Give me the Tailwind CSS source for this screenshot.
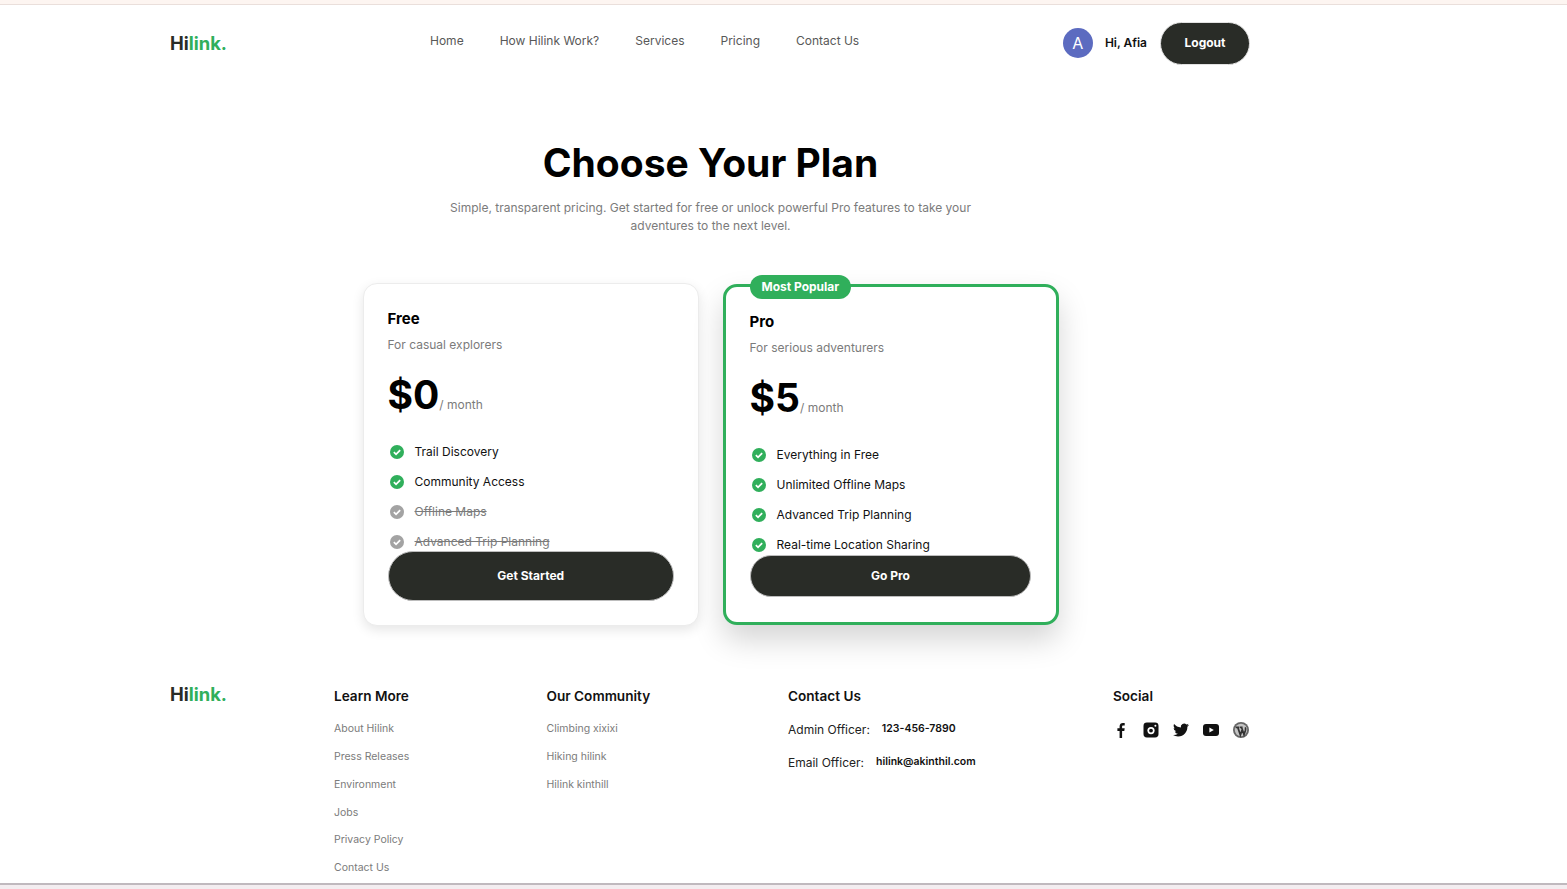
<!DOCTYPE html>
<html lang="en">
<head>
  <meta charset="UTF-8" />
  <title>Hilink - Pricing</title>
  <script src="https://cdn.jsdelivr.net/npm/@tailwindcss/browser@4"></script>
</head>
<body class="font-[Inter,sans-serif] bg-white h-[889px] overflow-hidden flex flex-col">
  <!-- Top strip -->
  <div class="h-[5px] shrink-0 bg-[#fdf5f1] border-b border-[#eadfdb]"></div>

  <div class="h-[878px] shrink-0 overflow-hidden">
    <!-- Navigation -->
    <nav class="relative h-[77px] pl-[170px] pr-[317px] flex items-start justify-between">
      <a class="mt-[24px] text-[18.4px] leading-[28px] font-bold text-[#292c27]">Hi<span class="text-[#30af5b]">link.</span></a>
      <ul class="absolute left-[430px] top-[27px] flex gap-[36px] text-[12px] leading-[18px] text-[#585858]">
        <li>Home</li>
        <li>How Hilink Work?</li>
        <li>Services</li>
        <li>Pricing</li>
        <li>Contact Us</li>
      </ul>
      <div class="mt-[16.5px] ml-auto flex items-center">
        <div class="w-[30px] h-[30px] rounded-full bg-[#5c6bc0] text-white text-[16px] flex items-center justify-center">A</div>
        <span class="ml-[12px] text-[12px] font-semibold text-[#111]">Hi, Afia</span>
        <button class="ml-[13px] w-[90px] h-[43px] rounded-full bg-[#292c27] border border-[#e2e2e2] text-white text-[12px] font-bold">Logout</button>
      </div>
    </nav>

    <!-- Heading -->
    <section class="w-[1421px] text-center">
      <h1 class="mt-[55px] text-[39px] leading-[52px] font-bold text-black">Choose Your Plan</h1>
      <p class="mt-[10px] mx-auto w-[540px] text-[12px] leading-[18px] text-[#7b7b7b]">Simple, transparent pricing. Get started for free or unlock powerful Pro features to take your adventures to the next level.</p>
    </section>

    <!-- Plans -->
    <section class="mt-[48px] pl-[363px] flex gap-[24px] items-start">
      <div class="w-[336px] h-[343px] rounded-[14px] bg-white border border-[#ececec] shadow-[0_4px_12px_rgba(0,0,0,0.1)] pl-[23.5px] pr-[24px] pt-[24px]">
        <h2 class="text-[15px] leading-[22px] font-bold text-black">Free</h2>
        <p class="mt-[6px] text-[12px] leading-[18px] text-[#7b7b7b]">For casual explorers</p>
        <div class="mt-[16.5px] flex items-end h-[50px]">
          <span class="mb-[1px] text-[39px] leading-[50px] font-bold text-black">$0</span>
          <span class="mb-[7px] text-[12px] leading-[18px] text-[#7b7b7b]">/ month</span>
        </div>
        <ul class="mt-[16.5px] text-[12px] text-[#111]">
          <li class="h-[30px] flex items-center">
            <svg class="ml-[2px] w-[14px] h-[14px]" viewBox="0 0 16 16"><circle cx="8" cy="8" r="8" fill="#30af5b"/><path d="M4.4 8.2l2.5 2.4 4.7-4.8" fill="none" stroke="#fff" stroke-width="2"/></svg>
            <span class="ml-[11px]">Trail Discovery</span>
          </li>
          <li class="h-[30px] flex items-center">
            <svg class="ml-[2px] w-[14px] h-[14px]" viewBox="0 0 16 16"><circle cx="8" cy="8" r="8" fill="#30af5b"/><path d="M4.4 8.2l2.5 2.4 4.7-4.8" fill="none" stroke="#fff" stroke-width="2"/></svg>
            <span class="ml-[11px]">Community Access</span>
          </li>
          <li class="h-[30px] flex items-center">
            <svg class="ml-[2px] w-[14px] h-[14px]" viewBox="0 0 16 16"><circle cx="8" cy="8" r="8" fill="#a3a3a3"/><path d="M4.4 8.2l2.5 2.4 4.7-4.8" fill="none" stroke="#fff" stroke-width="2"/></svg>
            <span class="ml-[11px] line-through text-[#7b7b7b]">Offline Maps</span>
          </li>
          <li class="h-[30px] flex items-center">
            <svg class="ml-[2px] w-[14px] h-[14px]" viewBox="0 0 16 16"><circle cx="8" cy="8" r="8" fill="#a3a3a3"/><path d="M4.4 8.2l2.5 2.4 4.7-4.8" fill="none" stroke="#fff" stroke-width="2"/></svg>
            <span class="ml-[11px] line-through text-[#7b7b7b]">Advanced Trip Planning</span>
          </li>
        </ul>
        <button class="relative -mt-[6px] block w-[286.5px] h-[50px] rounded-full bg-[#292c27] border border-[#bdbdbd] text-white text-[12px] font-bold">Get Started</button>
      </div>

      <div class="relative mt-[1px] w-[336px] h-[341px] rounded-[14px] bg-white border-[3px] border-[#30af5b] shadow-[0_15px_30px_rgba(0,0,0,0.17)] pl-[23.5px] pr-[25px] pt-[24px]">
        <span class="absolute left-[24px] -top-[12px] h-[24px] px-[11.5px] rounded-full bg-[#30af5b] text-white text-[12px] leading-[24px] font-bold">Most Popular</span>
        <h2 class="text-[15px] leading-[22px] font-bold text-black">Pro</h2>
        <p class="mt-[6px] text-[12px] leading-[18px] text-[#7b7b7b]">For serious adventurers</p>
        <div class="mt-[16.5px] flex items-end h-[50px]">
          <span class="mb-[1px] text-[39px] leading-[50px] font-bold text-black">$5</span>
          <span class="mb-[7px] text-[12px] leading-[18px] text-[#7b7b7b]">/ month</span>
        </div>
        <ul class="mt-[16.5px] text-[12px] text-[#111]">
          <li class="h-[30px] flex items-center">
            <svg class="ml-[2px] w-[14px] h-[14px]" viewBox="0 0 16 16"><circle cx="8" cy="8" r="8" fill="#30af5b"/><path d="M4.4 8.2l2.5 2.4 4.7-4.8" fill="none" stroke="#fff" stroke-width="2"/></svg>
            <span class="ml-[11px]">Everything in Free</span>
          </li>
          <li class="h-[30px] flex items-center">
            <svg class="ml-[2px] w-[14px] h-[14px]" viewBox="0 0 16 16"><circle cx="8" cy="8" r="8" fill="#30af5b"/><path d="M4.4 8.2l2.5 2.4 4.7-4.8" fill="none" stroke="#fff" stroke-width="2"/></svg>
            <span class="ml-[11px]">Unlimited Offline Maps</span>
          </li>
          <li class="h-[30px] flex items-center">
            <svg class="ml-[2px] w-[14px] h-[14px]" viewBox="0 0 16 16"><circle cx="8" cy="8" r="8" fill="#30af5b"/><path d="M4.4 8.2l2.5 2.4 4.7-4.8" fill="none" stroke="#fff" stroke-width="2"/></svg>
            <span class="ml-[11px]">Advanced Trip Planning</span>
          </li>
          <li class="h-[30px] flex items-center">
            <svg class="ml-[2px] w-[14px] h-[14px]" viewBox="0 0 16 16"><circle cx="8" cy="8" r="8" fill="#30af5b"/><path d="M4.4 8.2l2.5 2.4 4.7-4.8" fill="none" stroke="#fff" stroke-width="2"/></svg>
            <span class="ml-[11px]">Real-time Location Sharing</span>
          </li>
        </ul>
        <button class="relative -mt-[5.5px] ml-[0.5px] block w-[281px] h-[42.5px] rounded-full bg-[#292c27] border border-[#bdbdbd] text-white text-[12px] font-bold">Go Pro</button>
      </div>
    </section>

    <!-- Footer -->
    <footer class="mt-[55px] grid grid-cols-[164px_212.5px_241.5px_325px_auto] pl-[170px]">
      <a class="-mt-[1px] text-[18.4px] leading-[28px] font-bold text-[#292c27]">Hi<span class="text-[#30af5b]">link.</span></a>
      <div class="pt-[5px]">
        <h4 class="text-[13.6px] leading-[20px] font-semibold text-[#111]">Learn More</h4>
        <ul class="mt-[9.2px] text-[10.5px] leading-[27.8px] text-[#7b7b7b]">
          <li>About Hilink</li>
          <li>Press Releases</li>
          <li>Environment</li>
          <li>Jobs</li>
          <li>Privacy Policy</li>
          <li>Contact Us</li>
        </ul>
      </div>
      <div class="pt-[5px]">
        <h4 class="text-[13.6px] leading-[20px] font-semibold text-[#111]">Our Community</h4>
        <ul class="mt-[9.2px] text-[10.5px] leading-[27.8px] text-[#7b7b7b]">
          <li>Climbing xixixi</li>
          <li>Hiking hilink</li>
          <li>Hilink kinthill</li>
        </ul>
      </div>
      <div class="pt-[5px]">
        <h4 class="text-[13.6px] leading-[20px] font-semibold text-[#111]">Contact Us</h4>
        <p class="mt-[15px] flex items-start text-[12px] leading-[18px] text-[#222]">Admin Officer:<span class="ml-[12px] -mt-[1px] text-[10.5px] font-semibold text-[#111]">123-456-7890</span></p>
        <p class="mt-[15px] flex items-start text-[12px] leading-[18px] text-[#222]">Email Officer:<span class="ml-[12px] -mt-[1px] text-[10.5px] font-semibold text-[#111]">hilink@akinthil.com</span></p>
      </div>
      <div class="pt-[5px]">
        <h4 class="text-[13.6px] leading-[20px] font-semibold text-[#111]">Social</h4>
        <div class="mt-[16px] flex gap-[14px] items-center text-[#111]">
          <svg class="w-[16px] h-[16px]" viewBox="0 0 16 16"><path fill="currentColor" d="M6.6 16V9H4.4V6.2h2.2V4.3C6.6 2 8 .9 9.9.9c.8 0 1.6.1 1.8.1v2.4h-1.3c-1 0-1.3.5-1.3 1.2v1.6h2.6l-.4 2.8H9.1v7z"/></svg>
          <svg class="w-[16px] h-[16px]" viewBox="0 0 16 16"><rect x="0.5" y="0.5" width="15" height="15" rx="3.4" fill="currentColor"/><circle cx="8" cy="8.6" r="3.6" fill="#fff"/><circle cx="8" cy="8.6" r="1.9" fill="currentColor"/><circle cx="12.4" cy="3.8" r="1" fill="#fff"/></svg>
          <svg class="w-[16px] h-[16px]" viewBox="0 0 24 24"><path fill="currentColor" d="M23.95 4.57a10 10 0 0 1-2.82.77 4.96 4.96 0 0 0 2.16-2.72c-.95.55-2 .96-3.13 1.19a4.92 4.92 0 0 0-8.38 4.48C7.69 8.1 4.07 6.13 1.64 3.16a4.82 4.82 0 0 0-.66 2.47c0 1.7.87 3.21 2.18 4.09a4.9 4.9 0 0 1-2.23-.61v.06a4.92 4.92 0 0 0 3.95 4.83 4.9 4.9 0 0 1-2.22.08 4.93 4.93 0 0 0 4.6 3.42A9.87 9.87 0 0 1 0 19.54a13.94 13.94 0 0 0 7.55 2.21c9.06 0 14-7.5 14-13.98 0-.21 0-.42-.02-.63a10 10 0 0 0 2.42-2.57z"/></svg>
          <svg class="w-[16px] h-[16px]" viewBox="0 0 16 16"><rect x="0" y="2" width="16" height="12" rx="3" fill="currentColor"/><path d="M6.4 5.4v5.2L10.8 8z" fill="#fff"/></svg>
          <svg class="w-[16px] h-[16px]" viewBox="0 0 16 16"><circle cx="8" cy="8" r="8" fill="#666"/><circle cx="8" cy="8" r="6.2" fill="#c4c4c4"/><path d="M2.6 5.4h3.6M4.8 5.4l2.6 7.6 1.6-4.8M6.8 5.4h2.8M8.6 5.4l2.4 7.2 1.4-4c.5-1.6.2-2.6-.2-3.2" fill="none" stroke="#333" stroke-width="1.7"/></svg>
        </div>
      </div>
    </footer>
  </div>

  <!-- Bottom strip -->
  <div class="h-[6px] shrink-0 bg-[#f3edf0] border-t-2 border-[#c0b9be]"></div>
</body>
</html>
